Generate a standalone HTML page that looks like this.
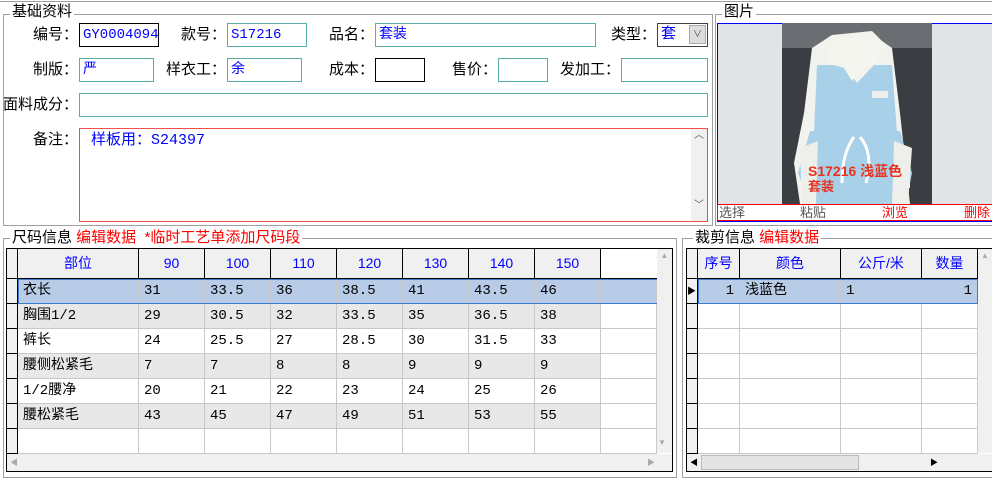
<!DOCTYPE html>
<html><head><meta charset="utf-8"><style>
*{box-sizing:border-box;margin:0;padding:0}
body{width:992px;height:476px;background:#fff;position:relative;overflow:hidden;font-family:"Liberation Sans","Noto Sans CJK SC",sans-serif;font-size:13px;color:#000}
.a{position:absolute;white-space:nowrap}
.gb{position:absolute;border:1px solid #a0a0a0}
.lb{position:absolute;background:#fff;padding:0 2px;font-size:15px;line-height:16px}
.in{position:absolute;border:1px solid #5aaca4;height:24px;color:#00f;padding-left:3px;line-height:22px;font-size:14px;font-family:"Liberation Mono","Noto Sans CJK SC",monospace}
.t{position:absolute;text-align:right;line-height:18px;font-size:15px}
.c{position:absolute;border-right:1px solid #c8c8c8;border-bottom:1px solid #c8c8c8;line-height:24px;padding-left:5px;font-family:"Liberation Mono","Noto Sans CJK SC",monospace;font-size:14px}
.h{position:absolute;background:#f0f0f0;border-right:1px solid #000;border-bottom:1px solid #000;color:#00f;text-align:center;line-height:29px;font-size:14px}
.ri{position:absolute;background:#f0f0f0;border-right:1px solid #000;border-bottom:1px solid #000}
.sb{position:absolute;background:#f0f0f0}
</style></head><body>
<div class="a" style="left:0;top:1px;width:992px;height:1px;background:#a0a0a0"></div>

<div class="gb" style="left:3px;top:14px;width:710px;height:212px"></div>
<div class="lb" style="left:10px;top:4px">基础资料</div>
<div class="t" style="left:10px;top:26px;width:68px">编号：</div>
<div class="in" style="left:79px;top:23px;width:80px;border-color:#000">GY0004094</div>
<div class="t" style="left:150px;top:26px;width:76px">款号：</div>
<div class="in" style="left:227px;top:23px;width:80px">S17216</div>
<div class="t" style="left:300px;top:26px;width:74px">品名：</div>
<div class="in" style="left:375px;top:23px;width:221px">套装</div>
<div class="t" style="left:590px;top:26px;width:66px">类型：</div>
<div class="in" style="left:657px;top:23px;width:51px;border-color:#404040;font-size:15px">套</div>
<div class="a" style="left:689px;top:25px;width:17px;height:19px;background:#ddd;border:1px solid #aaa;font-size:9px;text-align:center;line-height:17px;color:#444">∨</div>

<div class="t" style="left:10px;top:61px;width:68px">制版：</div>
<div class="in" style="left:79px;top:58px;width:75px">严</div>
<div class="t" style="left:140px;top:61px;width:86px">样衣工：</div>
<div class="in" style="left:227px;top:58px;width:75px">余</div>
<div class="t" style="left:300px;top:61px;width:74px">成本：</div>
<div class="in" style="left:375px;top:58px;width:50px;border-color:#000"></div>
<div class="t" style="left:420px;top:61px;width:77px">售价：</div>
<div class="in" style="left:498px;top:58px;width:50px"></div>
<div class="t" style="left:535px;top:61px;width:85px">发加工：</div>
<div class="in" style="left:621px;top:58px;width:87px"></div>

<div class="t" style="left:0px;top:96px;width:78px">面料成分：</div>
<div class="in" style="left:79px;top:93px;width:629px"></div>

<div class="t" style="left:10px;top:131px;width:68px">备注：</div>
<div class="in" style="left:79px;top:128px;width:629px;height:94px;border-color:#f05050;line-height:20px;padding-left:11px;padding-top:2px;font-size:15px">样板用：S24397</div>
<div class="sb" style="left:691px;top:129px;width:16px;height:92px;color:#555;font-size:10px;text-align:center;line-height:14px">︿<br><br><br><br><br>﹀</div>

<div class="gb" style="left:715px;top:14px;width:290px;height:212px"></div>
<div class="lb" style="left:722px;top:4px">图片</div>
<div class="a" style="left:717px;top:23px;width:280px;height:199px;border:1px solid #00f;background:#e2e3e6"></div>
<svg class="a" style="left:782px;top:23px" width="150" height="181" viewBox="0 0 150 181">
<rect width="150" height="181" fill="#3a3d42"/>
<rect x="0" y="0" width="150" height="25" fill="#6a6e72"/>
<path d="M30 25 L50 12 L90 8 L100 18 L110 25 L118 90 L128 181 L18 181 L12 140 L22 90 Z" fill="#f2f2ee"/>
<path d="M35 42 L62 42 L75 60 L92 42 L110 42 L115 110 L32 110 Z" fill="#a8d0e8"/>
<path d="M50 12 L100 18 L95 40 L78 48 L70 58 L62 45 L45 40 Z" fill="#f5f5f0"/>
<path d="M28 108 L118 108 L130 150 L124 181 L28 181 L16 150 Z" fill="#a8d0e8"/>
<path d="M18 125 L36 118 L34 181 L20 181 Z" fill="#eeeeea"/>
<path d="M112 118 L130 125 L126 181 L110 181 Z" fill="#eeeeea"/>
<path d="M72 114 Q60 130 60 160 M78 114 Q92 130 84 160" stroke="#fff" stroke-width="3" fill="none"/>
<rect x="90" y="68" width="16" height="7" fill="#eee"/>
<rect x="112" y="158" width="16" height="7" fill="#eee"/>
<text x="26" y="153" fill="#e8321e" font-size="14" font-weight="bold" font-family="Liberation Sans,Noto Sans CJK SC,sans-serif">S17216 浅蓝色</text>
<text x="26" y="168" fill="#e8321e" font-size="13" font-weight="bold" font-family="Noto Sans CJK SC,sans-serif">套装</text>
</svg>
<div class="a" style="left:717px;top:204px;width:280px;height:17px;border:1px solid #f00;background:#fff;font-size:13px;line-height:15px">
<span class="a" style="left:1px;color:#555">选择</span><span class="a" style="left:82px;color:#555">粘贴</span><span class="a" style="left:164px;color:#f00">浏览</span><span class="a" style="left:246px;color:#f00">删除</span></div>

<div class="gb" style="left:3px;top:238px;width:674px;height:240px"></div>
<div class="lb" style="left:10px;top:230px">尺码信息 <span style="color:#f00">编辑数据 &nbsp;*临时工艺单添加尺码段</span></div>
<div class="a" style="left:6px;top:248px;width:667px;height:224px;border:1px solid #000;background:#fff"></div>
<div class="ri" style="left:7px;top:249px;width:11px;height:30px"></div>
<div class="h" style="left:18px;top:249px;width:121px;height:30px">部位</div>
<div class="h" style="left:139px;top:249px;width:66px;height:30px">90</div>
<div class="h" style="left:205px;top:249px;width:66px;height:30px">100</div>
<div class="h" style="left:271px;top:249px;width:66px;height:30px">110</div>
<div class="h" style="left:337px;top:249px;width:66px;height:30px">120</div>
<div class="h" style="left:403px;top:249px;width:66px;height:30px">130</div>
<div class="h" style="left:469px;top:249px;width:66px;height:30px">140</div>
<div class="h" style="left:535px;top:249px;width:66px;height:30px">150</div>
<div class="a" style="left:601px;top:249px;width:56px;height:30px;border-bottom:1px solid #000"></div>
<div id="rows"></div>
<div class="sb" style="left:657px;top:249px;width:15px;height:204px;font-size:8px;color:#aaa;text-align:center;line-height:14px">▲</div>
<div class="a" style="left:658px;top:438px;font-size:8px;color:#aaa">▼</div>
<div class="sb" style="left:7px;top:454px;width:665px;height:17px;font-size:8px;color:#aaa;line-height:17px;padding-left:3px">◀<span style="position:absolute;left:640px">▶</span></div>

<div class="gb" style="left:682px;top:238px;width:320px;height:240px"></div>
<div class="lb" style="left:693px;top:230px">裁剪信息 <span style="color:#f00">编辑数据</span></div>
<div class="a" style="left:686px;top:248px;width:310px;height:224px;border:1px solid #000;background:#fff"></div>
<div class="ri" style="left:687px;top:249px;width:11px;height:30px"></div>
<div class="h" style="left:698px;top:249px;width:42px;height:30px">序号</div>
<div class="h" style="left:740px;top:249px;width:101px;height:30px">颜色</div>
<div class="h" style="left:841px;top:249px;width:81px;height:30px">公斤/米</div>
<div class="h" style="left:922px;top:249px;width:56px;height:30px">数量</div>
<div id="rows2"></div>
<div class="sb" style="left:978px;top:249px;width:14px;height:204px;font-size:8px;color:#aaa;text-align:center;line-height:14px">▲</div>
<div class="sb" style="left:687px;top:454px;width:305px;height:17px;font-size:8px;line-height:17px;padding-left:3px">◀<span style="position:absolute;left:243px">▶</span><span style="position:absolute;left:14px;top:1px;width:158px;height:15px;background:#e4e4e4;border:1px solid #bbb"></span></div>
<script>
var d=[["衣长",31,"33.5",36,"38.5",41,"43.5",46],["胸围1/2",29,"30.5",32,"33.5",35,"36.5",38],["裤长",24,"25.5",27,"28.5",30,"31.5",33],["腰侧松紧毛",7,7,8,8,9,9,9],["1/2腰净",20,21,22,23,24,25,26],["腰松紧毛",43,45,47,49,51,53,55],["","","","","","","",""]];
var xs=[18,139,205,271,337,403,469,535,601],h="";
d.forEach(function(r,i){var y=279+i*25,bg=i==0?"#b8cce8":(i%2?"#e8e8e8":"#fff");
h+='<div class="ri" style="left:7px;top:'+y+'px;width:11px;height:25px"></div>';
for(var j=0;j<9;j++){var w=(j<8?xs[j+1]:657)-xs[j];h+='<div class="c" style="left:'+xs[j]+'px;top:'+y+'px;width:'+w+'px;height:25px;background:'+(j==8&&i>0?'#fff':bg)+'">'+(j<8?r[j]:'')+'</div>';}
});
h+='<div class="a" style="left:18px;top:279px;width:640px;height:25px;border:1px solid #3a7fd0"></div>';
document.getElementById("rows").innerHTML=h;
var x2=[698,740,841,922,978],g="";
for(var i=0;i<7;i++){var y=279+i*25,bg=i==0?"#b8cce8":"#fff";
g+='<div class="ri" style="left:687px;top:'+y+'px;width:11px;height:25px;font-size:9px;line-height:25px">'+(i==0?'▶':'')+'</div>';
var v=i==0?["1","浅蓝色","1","1"]:["","","",""];
for(var j=0;j<4;j++){g+='<div class="c" style="left:'+x2[j]+'px;top:'+y+'px;width:'+(x2[j+1]-x2[j])+'px;height:25px;background:'+bg+';'+((j==0||j==3)?'text-align:right;padding-right:5px':'')+'">'+v[j]+'</div>';}}
g+='<div class="a" style="left:698px;top:279px;width:280px;height:25px;border:1px solid #3a7fd0"></div>';
document.getElementById("rows2").innerHTML=g;
</script>
</body></html>
